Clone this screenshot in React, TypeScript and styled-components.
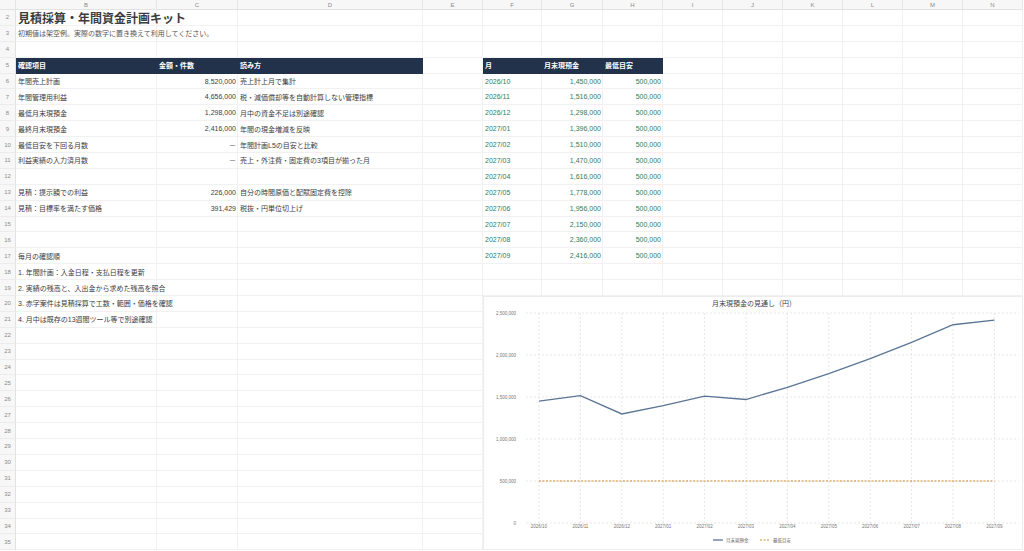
import React from 'react';
import styled, { createGlobalStyle } from 'styled-components';

const Global = createGlobalStyle`
  body { margin: 0; background: #fff; font-family: "Liberation Sans", "Noto Sans CJK JP", sans-serif; }
`;

const COLS = [16, 141, 81, 185, 60, 59, 61, 60, 60, 60, 60, 60, 60, 60];
const LETTERS = ['', 'B', 'C', 'D', 'E', 'F', 'G', 'H', 'I', 'J', 'K', 'L', 'M', 'N'];
const ROW_H = 15.9;

const Sheet = styled.div`
  position: relative;
  width: 1024px;
  height: 551px;
  overflow: hidden;
  display: grid;
  grid-template-columns: ${COLS.map(c => c + 'px').join(' ')};
  grid-template-rows: 10px repeat(34, ${ROW_H}px);
  font-size: 7px;
  color: #3c3c3c;
`;

const ColHead = styled.div`
  background: #f7f7f7;
  border-right: 1px solid #e6e6e6;
  border-bottom: 1px solid #e2e2e2;
  color: #8a8a8a;
  font-size: 6px;
  display: flex;
  align-items: center;
  justify-content: center;
`;

const RowNum = styled.div`
  background: #f7f7f7;
  border-right: 1px solid #e2e2e2;
  border-bottom: 1px solid #ececec;
  color: #8a8a8a;
  font-size: 6px;
  display: flex;
  align-items: center;
  justify-content: center;
`;

type Kind = 'plain' | 'head' | 'green' | 'title' | 'note';

const Cell = styled.div<{ $kind: Kind; $right?: boolean }>`
  border-right: 1px solid ${p => (p.$kind === 'head' ? 'transparent' : '#f1f1f1')};
  border-bottom: 1px solid ${p => (p.$kind === 'head' ? 'transparent' : '#f1f1f1')};
  background: ${p => (p.$kind === 'head' ? '#22324a' : 'transparent')};
  color: ${p => (p.$kind === 'head' ? '#fff' : p.$kind === 'green' ? '#2f7d55' : p.$kind === 'note' ? '#555' : '#3c3c3c')};
  font-weight: ${p => (p.$kind === 'head' || p.$kind === 'title' ? 700 : 400)};
  font-size: ${p => (p.$kind === 'title' ? '12px' : '7px')};
  display: flex;
  align-items: center;
  justify-content: ${p => (p.$right ? 'flex-end' : 'flex-start')};
  padding: 0 1px 0 2px;
  white-space: nowrap;
  overflow: visible;
  position: relative;
  z-index: ${p => (p.$kind === 'title' || p.$kind === 'plain' || p.$kind === 'note' ? 1 : 0)};
`;

type C = { t: string; k?: Kind; r?: boolean };
const rows: Record<number, Record<number, C>> = {
  2: { 1: { t: '見積採算・年間資金計画キット', k: 'title' } },
  3: { 1: { t: '初期値は架空例。実際の数字に置き換えて利用してください。', k: 'note' } },
  5: {
    1: { t: '確認項目', k: 'head' }, 2: { t: '金額・件数', k: 'head' }, 3: { t: '読み方', k: 'head' },
    5: { t: '月', k: 'head' }, 6: { t: '月末現預金', k: 'head' }, 7: { t: '最低目安', k: 'head' },
  },
  6: { 1: { t: '年間売上計画' }, 2: { t: '8,520,000', r: true }, 3: { t: '売上計上月で集計' } },
  7: { 1: { t: '年間管理用利益' }, 2: { t: '4,656,000', r: true }, 3: { t: '税・減価償却等を自動計算しない管理指標' } },
  8: { 1: { t: '最低月末現預金' }, 2: { t: '1,298,000', r: true }, 3: { t: '月中の資金不足は別途確認' } },
  9: { 1: { t: '最終月末現預金' }, 2: { t: '2,416,000', r: true }, 3: { t: '年間の現金増減を反映' } },
  10: { 1: { t: '最低目安を下回る月数' }, 2: { t: '－', r: true }, 3: { t: '年間計画L5の目安と比較' } },
  11: { 1: { t: '利益実績の入力済月数' }, 2: { t: '－', r: true }, 3: { t: '売上・外注費・固定費の3項目が揃った月' } },
  13: { 1: { t: '見積：提示額での利益' }, 2: { t: '226,000', r: true }, 3: { t: '自分の時間原価と配賦固定費を控除' } },
  14: { 1: { t: '見積：目標率を満たす価格' }, 2: { t: '391,429', r: true }, 3: { t: '税抜・円単位切上げ' } },
  17: { 1: { t: '毎月の確認順' } },
  18: { 1: { t: '1. 年間計画：入金日程・支払日程を更新' } },
  19: { 1: { t: '2. 実績の残高と、入出金から求めた残高を照合' } },
  20: { 1: { t: '3. 赤字案件は見積採算で工数・範囲・価格を確認' } },
  21: { 1: { t: '4. 月中は既存の13週間ツール等で別途確認' } },
};

const months = ['2026/10', '2026/11', '2026/12', '2027/01', '2027/02', '2027/03', '2027/04', '2027/05', '2027/06', '2027/07', '2027/08', '2027/09'];
const cash = [1450000, 1516000, 1298000, 1396000, 1510000, 1470000, 1616000, 1778000, 1956000, 2150000, 2360000, 2416000];
months.forEach((m, i) => {
  rows[6 + i] = {
    ...(rows[6 + i] || {}),
    5: { t: m, k: 'green' },
    6: { t: cash[i].toLocaleString('en-US'), k: 'green', r: true },
    7: { t: '500,000', k: 'green', r: true },
  };
});

const ChartBox = styled.div`
  position: absolute;
  left: 483px;
  top: 296px;
  width: 540px;
  height: 254px;
  background: #fff;
  border: 1px solid #ececec;
  box-sizing: border-box;
  z-index: 2;
`;

const Chart: React.FC = () => {
  // chart-local coordinates
  const x0 = 55, step = 41.4;
  const yOf = (v: number) => 226 - (v / 500000) * 42;
  const ticks = [0, 500000, 1000000, 1500000, 2000000, 2500000];
  const pts = cash.map((v, i) => `${x0 + i * step},${yOf(v)}`).join(' ');
  return (
    <ChartBox>
      <svg width="540" height="254" fontFamily='"Liberation Sans", "Noto Sans CJK JP", sans-serif'>
        <text x="270" y="9" fontSize="7" fill="#444" textAnchor="middle">月末現預金の見通し（円）</text>
        {ticks.map(t => (
          <g key={t}>
            <line x1="42" x2="535" y1={yOf(t)} y2={yOf(t)} stroke="#ddd" strokeWidth="0.7" strokeDasharray="2 2" />
            <text x="32" y={yOf(t) + 2} fontSize="4.5" fill="#777" textAnchor="end">{t === 0 ? '0' : t.toLocaleString('en-US')}</text>
          </g>
        ))}
        {months.map((m, i) => (
          <g key={m}>
            <line x1={x0 + i * step} x2={x0 + i * step} y1={yOf(2500000)} y2="226" stroke="#ddd" strokeWidth="0.7" strokeDasharray="2 2" />
            <text x={x0 + i * step} y="231" fontSize="4.5" fill="#777" textAnchor="middle">{m}</text>
          </g>
        ))}
        <line x1={x0} x2={x0 + 11 * step} y1={yOf(500000)} y2={yOf(500000)} stroke="#d08a2a" strokeWidth="1" strokeDasharray="2 1.5" />
        <polyline points={pts} fill="none" stroke="#5b7595" strokeWidth="1.3" />
        <line x1="229" x2="239" y1="243" y2="243" stroke="#5b7595" strokeWidth="1.3" />
        <text x="242" y="245" fontSize="4.5" fill="#666">月末現預金</text>
        <line x1="276" x2="286" y1="243" y2="243" stroke="#d08a2a" strokeWidth="1" strokeDasharray="2 1.5" />
        <text x="289" y="245" fontSize="4.5" fill="#666">最低目安</text>
      </svg>
    </ChartBox>
  );
};

const App: React.FC = () => {
  const cells: React.ReactNode[] = [];
  LETTERS.forEach((l, c) => cells.push(<ColHead key={`h${c}`}>{l}</ColHead>));
  for (let r = 2; r <= 35; r++) {
    cells.push(<RowNum key={`n${r}`}>{r}</RowNum>);
    for (let c = 1; c < COLS.length; c++) {
      const d = rows[r]?.[c];
      cells.push(
        <Cell key={`${r}-${c}`} $kind={d?.k ?? (r === 5 && c <= 3 ? 'head' : 'plain')} $right={d?.r}>
          {d?.t}
        </Cell>
      );
    }
  }
  return (
    <>
      <Global />
      <Sheet>
        {cells}
        <Chart />
      </Sheet>
    </>
  );
};

export default App;
